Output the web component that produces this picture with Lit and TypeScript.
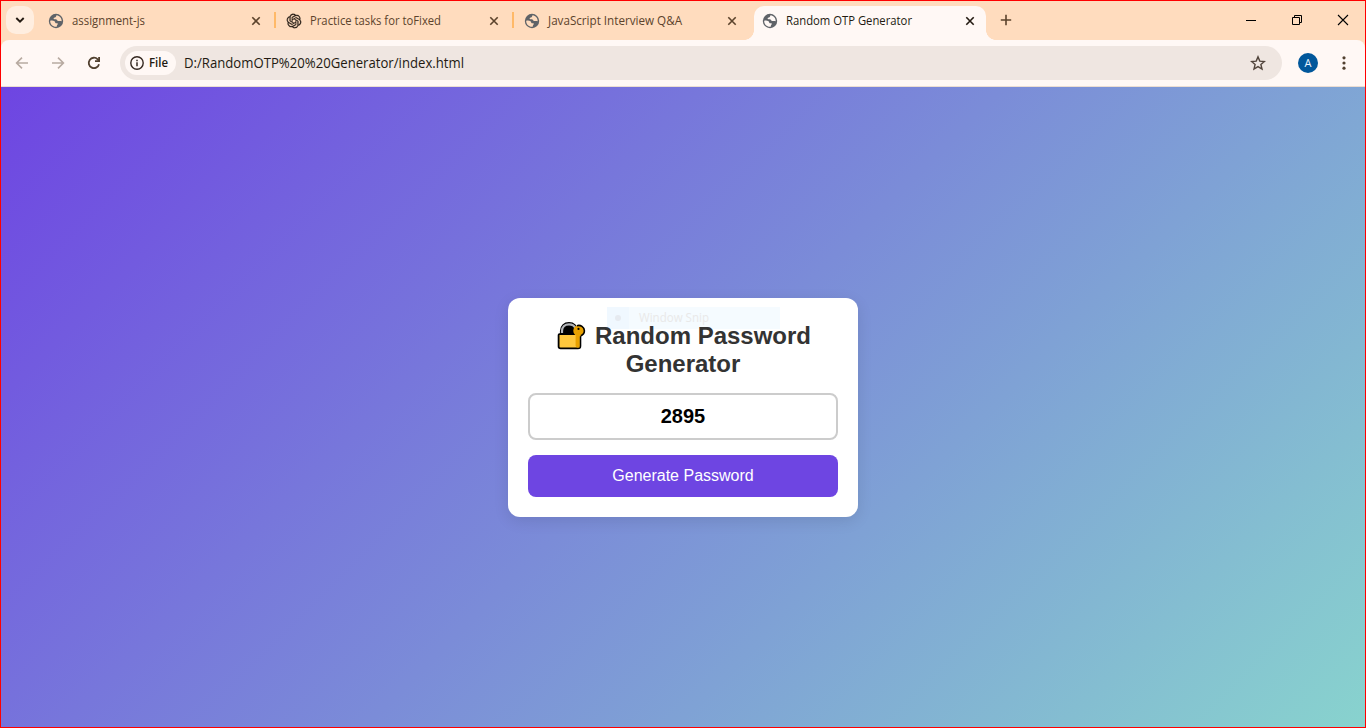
import { LitElement, html, css, nothing } from "lit";
import { customElement, state, property } from "lit/decorators.js";

const globe = html`<svg class="fav" width="16" height="16" viewBox="0 0 16 16">
  <circle cx="8" cy="8" r="7.2" fill="#5f6368" />
  <path d="M8.6 2.2C8 3 8.3 3.7 7.5 4.2C6.6 4.7 5.6 4.4 5.6 5.4C5.7 6.3 7 6 7.9 6.2C9 6.5 9 7.6 9.9 7.9C10.9 8.2 12.2 7.6 13.7 8.2C13.8 5.2 11.6 2.5 8.6 2.2Z" fill="var(--hole)" />
  <path d="M2.2 7.7C3.7 7.5 5.4 7.4 6.5 8.3C7.4 9.1 7 10 7.9 10.3C8.9 10.5 9.5 10.1 9.8 10.8C10 11.7 8.8 11.9 8.7 13.7C5 14.1 2 11.3 2.2 7.7Z" fill="var(--hole)" />
</svg>`;

const knot = html`<svg class="fav" width="16" height="16" viewBox="-1.2 -1.2 26.4 26.4">
  <path fill="#2b2018" stroke="#2b2018" stroke-width=".4" d="M22.2819 9.8211a5.9847 5.9847 0 0 0-.5157-4.9108 6.0462 6.0462 0 0 0-6.5098-2.9A6.0651 6.0651 0 0 0 4.9807 4.1818a5.9847 5.9847 0 0 0-3.9977 2.9 6.0462 6.0462 0 0 0 .7427 7.0966 5.98 5.98 0 0 0 .511 4.9107 6.051 6.051 0 0 0 6.5146 2.9001A5.9847 5.9847 0 0 0 13.2599 24a6.0557 6.0557 0 0 0 5.7718-4.2058 5.9894 5.9894 0 0 0 3.9977-2.9001 6.0557 6.0557 0 0 0-.7475-7.0729zm-9.022 12.6081a4.4755 4.4755 0 0 1-2.8764-1.0408l.1419-.0804 4.7783-2.7582a.7948.7948 0 0 0 .3927-.6813v-6.7369l2.02 1.1686a.071.071 0 0 1 .038.0615v5.5826a4.504 4.504 0 0 1-4.4945 4.4944zm-9.6607-4.1254a4.4708 4.4708 0 0 1-.5346-3.0137l.142.0852 4.783 2.7582a.7712.7712 0 0 0 .7806 0l5.8428-3.3685v2.3324a.0804.0804 0 0 1-.0332.0615L9.74 19.9502a4.4992 4.4992 0 0 1-6.1408-1.6464zM2.3408 7.8956a4.485 4.485 0 0 1 2.3655-1.9728V11.6a.7664.7664 0 0 0 .3879.6765l5.8144 3.3543-2.0201 1.1685a.0757.0757 0 0 1-.071 0l-4.8303-2.7865A4.504 4.504 0 0 1 2.3408 7.872zm16.5963 3.8558L13.1038 8.364 15.1192 7.2a.0757.0757 0 0 1 .071 0l4.8303 2.7913a4.4944 4.4944 0 0 1-.6765 8.1042v-5.6772a.79.79 0 0 0-.407-.667zm2.0107-3.0231l-.142-.0852-4.7735-2.7818a.7759.7759 0 0 0-.7854 0L9.409 9.2297V6.8974a.0662.0662 0 0 1 .0284-.0615l4.8303-2.7866a4.4992 4.4992 0 0 1 6.6802 4.66zM8.3065 12.863l-2.02-1.1638a.0804.0804 0 0 1-.038-.0567V6.0742a4.4992 4.4992 0 0 1 7.3757-3.4537l-.142.0805L8.704 5.459a.7948.7948 0 0 0-.3927.6813zm1.0976-2.3654l2.602-1.4998 2.6069 1.4998v2.9994l-2.5974 1.4997-2.6067-1.4997Z" />
</svg>`;

@customElement("fit-text")
class FitText extends LitElement {
  @property() text = "";
  @property({ type: Number }) width = 0;
  @property({ type: Number }) size = 12;
  @property({ type: Number }) weight = 400;
  static styles = css`
    :host { display: block; height: 20px; }
    svg { display: block; overflow: visible; }
    text { font-family: "Open Sans", "Noto Sans", sans-serif; fill: currentColor; }
  `;
  render() {
    return html`<svg width=${this.width} height="20">
      <text x="0" y="14" font-size=${this.size} font-weight=${this.weight}
        textLength=${this.width} lengthAdjust="spacingAndGlyphs">${this.text}</text>
    </svg>`;
  }
}

@customElement("browser-bar")
class BrowserBar extends LitElement {
  static styles = css`
    :host { display: block; background: #ffdcbe; color: #5c432c; --hole: #ffdcbe; }
    svg { display: block; flex: none; }
    .strip { display: flex; height: 39px; }
    .search { width: 28px; height: 28px; margin: 5px 7px 0 5px; border-radius: 10px; background: #ffeee0; display: flex; align-items: center; justify-content: center; }
    .tab { position: relative; width: 232px; height: 34px; margin: 5px 3px 0; box-sizing: border-box; padding: 0 10px 5px 8px; display: flex; align-items: center; }
    .tab:nth-child(2) { margin-left: -1px; }
    .tab fit-text { margin-left: 8px; flex: 1; }
    .sep::after { content: ""; position: absolute; right: -4px; top: 6px; width: 2px; height: 16px; background: #ffb968; }
    .active { background: #fff8f5; color: #231a11; --hole: #fff8f5; border-radius: 10px 10px 0 0; }
    .active::before, .active::after { content: ""; position: absolute; bottom: 0; width: 10px; height: 10px; }
    .active::before { left: -10px; background: radial-gradient(circle at 0 0, #ffdcbe 9.6px, #fff8f5 10.2px); }
    .active::after { right: -10px; background: radial-gradient(circle at 100% 0, #ffdcbe 9.6px, #fff8f5 10.2px); }
    .plus { margin: 13px 0 0 11px; }
    .win { margin-left: auto; display: flex; gap: 34px; padding: 13px 16px 0 0; }
    .tools { height: 46px; box-sizing: border-box; display: flex; align-items: center; background: #fff8f5; border-radius: 8px 8px 0 0; padding: 0 13px 0 13px; }
    .nav { display: flex; gap: 20px; }
    .address { flex: 1; height: 34px; border-radius: 17px; background: #efe6e1; margin: 0 16px 0 18px; display: flex; align-items: center; padding: 0 16px 0 5px; color: #231a11; }
    .chip { height: 24px; width: 51px; box-sizing: border-box; padding-left: 4px; border-radius: 12px; background: #fff8f5; display: flex; align-items: center; gap: 4px; }
    .url { margin: 1px 0 0 8px; flex: 1; }
    .avatar { width: 20px; height: 20px; border-radius: 50%; background: #01579b; color: #e8f4ff; font: 11px/20px "Open Sans", sans-serif; text-align: center; }
    .dots { margin-left: 18px; }
    .line { height: 1px; background: #ebddd2; }
  `;
  private tabs = [
    { title: "assignment-js", width: 73, icon: globe },
    { title: "Practice tasks for toFixed", width: 131, icon: knot },
    { title: "JavaScript Interview Q&A", width: 134, icon: globe },
    { title: "Random OTP Generator", width: 126, icon: globe },
  ];
  render() {
    return html`
      <div class="strip">
        <div class="search">
          <svg width="10" height="8" viewBox="0 0 10 8"><path d="M1.3 2L5 5.7L8.7 2" fill="none" stroke="#231a11" stroke-width="1.9" /></svg>
        </div>
        ${this.tabs.map(
          (t, i) => html`<div class="tab ${i === 3 ? "active" : i < 2 ? "sep" : ""}">
            ${t.icon}<fit-text .text=${t.title} .width=${t.width}></fit-text>
            <svg width="12" height="12" viewBox="0 0 12 12"><path d="M2.3 2.3L9.7 9.7M9.7 2.3L2.3 9.7" stroke="currentColor" stroke-width="1.6" /></svg>
          </div>`
        )}
        <svg class="plus" width="12" height="12" viewBox="0 0 12 12"><path d="M6 .8V11.2M.8 6H11.2" stroke="#5c432c" stroke-width="1.6" /></svg>
        <div class="win">
          <svg width="12" height="12"><path d="M1 6.5H11" stroke="#000" /></svg>
          <svg width="12" height="12"><path d="M1.5 3.5H8.5V10.5H1.5ZM3.5 3.5V1.5H10.5V8.5H8.5" fill="none" stroke="#000" /></svg>
          <svg width="12" height="12"><path d="M1 1L11 11M11 1L1 11" stroke="#000" stroke-width="1.1" /></svg>
        </div>
      </div>
      <div class="tools">
        <div class="nav">
          <svg width="16" height="16" viewBox="0 0 16 16"><path d="M14 8H3M8 2.6L2.6 8L8 13.4" fill="none" stroke="#b8aaa1" stroke-width="1.6" /></svg>
          <svg width="16" height="16" viewBox="0 0 16 16"><path d="M2 8H13M8 2.6L13.4 8L8 13.4" fill="none" stroke="#b8aaa1" stroke-width="1.6" /></svg>
          <svg width="16" height="16" viewBox="0 0 16 16"><path d="M13 9.2A5.2 5.2 0 1 1 11.7 4.3L13 5.6" fill="none" stroke="#51402f" stroke-width="1.8" /><path d="M14 2V7H9V5.2H12.2V2Z" fill="#51402f" /></svg>
        </div>
        <div class="address">
          <div class="chip">
            <svg width="16" height="16" viewBox="0 0 16 16"><circle cx="8" cy="8" r="6.2" fill="none" stroke="#352820" stroke-width="1.4" /><path d="M8 7.2V11.2M8 4.7V6.2" stroke="#352820" stroke-width="1.5" /></svg>
            <fit-text text="File" .width=${19} .weight=${600}></fit-text>
          </div>
          <fit-text class="url" text="D:/RandomOTP%20%20Generator/index.html" .width=${280} .size=${14}></fit-text>
          <svg width="16" height="16" viewBox="0 0 16 16"><path d="M8 1.9L9.8 6.1L14.4 6.5L10.9 9.5L12 14L8 11.6L4 14L5.1 9.5L1.6 6.5L6.2 6.1Z" fill="none" stroke="#51443b" stroke-width="1.4" /></svg>
        </div>
        <div class="avatar">A</div>
        <svg class="dots" width="16" height="16" viewBox="0 0 16 16" fill="#51402f"><circle cx="8" cy="2.8" r="1.6" /><circle cx="8" cy="8" r="1.6" /><circle cx="8" cy="13.2" r="1.6" /></svg>
      </div>
      <div class="line"></div>
    `;
  }
}

@customElement("app-root")
class AppRoot extends LitElement {
  @state() private code = "2895";
  static styles = css`
    :host { display: flex; flex-direction: column; width: 1366px; height: 728px; box-sizing: border-box; border: 1px solid #f00; font-family: Arial, "Liberation Sans", sans-serif; overflow: hidden; }
    .page { flex: 1; display: flex; align-items: center; justify-content: center; background: linear-gradient(135deg, #6e45e2, #88d3ce); }
    .card { position: relative; width: 350px; height: 219px; box-sizing: border-box; padding: 24px 20px 20px; border-radius: 12px; background: #fff; box-shadow: 0 4px 15px rgba(0, 0, 0, 0.1); margin-top: 1px; }
    h2 { margin: 0 0 15px; font-size: 24px; line-height: 28px; color: #333; text-align: center; }
    .title { display: flex; justify-content: center; height: 28px; position: relative; }
    .lock { margin: -2px 9px 0 1px; flex: none; }
    .code { display: block; width: 310px; height: 47px; box-sizing: border-box; border: 2px solid #ccc; border-radius: 8px; padding: 0; margin: 0 0 15px; text-align: center; font: bold 20px Arial, "Liberation Sans", sans-serif; color: #000; background: #fff; line-height: 42px; }
    button { display: block; width: 310px; height: 42px; border: 0; border-radius: 8px; background: #6e45e2; color: #fff; font: 16px Arial, "Liberation Sans", sans-serif; padding: 0; }
    .snip { position: absolute; left: 99px; top: 9px; width: 173px; height: 22px; display: flex; align-items: center; background: #f5fbff; color: #e9e9e9; }
    .mark { width: 22px; height: 22px; display: flex; align-items: center; justify-content: center; background: #f0f8ff; margin-right: 10px; }
    .mark::before { content: ""; width: 6px; height: 6px; border-radius: 50%; background: #e6eaf0; }
  `;
  private generate() {
    this.code = String(Math.floor(1000 + Math.random() * 9000));
  }
  render() {
    return html`
      <browser-bar></browser-bar>
      <div class="page">
        <div class="card">
          <div class="snip"><span class="mark"></span><fit-text text="Window Snip" .width=${70}></fit-text></div>
          <h2>
            <span class="title">
              <svg class="lock" width="30" height="30" viewBox="0 0 30 30">
                <path d="M5 14V11C5 6 8.4 3.1 13 3.1S21 6 21 11V14Z" fill="#000" stroke="#000" stroke-width="2.2" />
                <path d="M6 13V11C6 6.8 9 4.3 13 4.3C16.2 4.3 18.6 5.8 19.6 8.4" fill="none" stroke="#b4b6ba" stroke-width="2.2" />
                <path d="M3.4 14.2H24.4V26Q24.4 28.4 22 28.4H4.6Q2.6 28.4 2.6 26.4V15Q2.6 14.2 3.4 14.2Z" fill="#ffc83d" stroke="#000" stroke-width="1.8" />
                <path d="M19.6 15.2H23.5V27.5H21L19.6 26Z" fill="#e8a100" />
                <circle cx="23" cy="10.8" r="5.7" fill="#e8a100" />
                <path d="M21 5.7A5.7 5.7 0 0 1 28.4 10.8C28.4 13.3 26.9 15 24.8 15.8" fill="none" stroke="#000" stroke-width="1.6" />
                <circle cx="22.5" cy="8.9" r="1.1" fill="#000" />
              </svg>
              <span>Random Password</span>
            </span>
            Generator
          </h2>
          <div class="code">${this.code || nothing}</div>
          <button @click=${this.generate}>Generate Password</button>
        </div>
      </div>
    `;
  }
}
